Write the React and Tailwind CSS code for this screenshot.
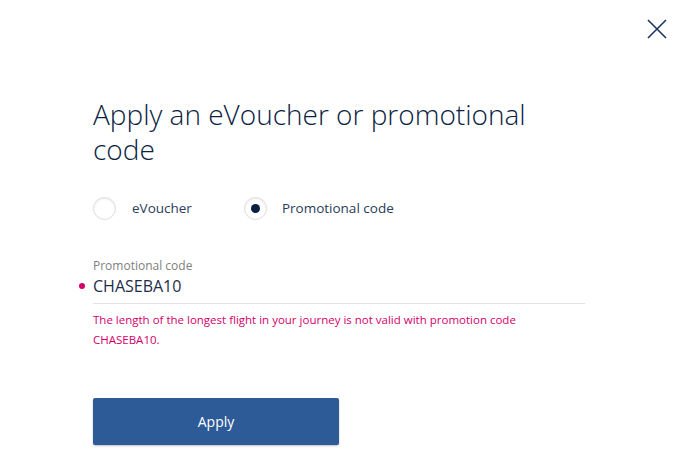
import { useState } from "react";

export default function App() {
  const [type, setType] = useState("promo");
  const [code, setCode] = useState("CHASEBA10");

  return (
    <div className="relative w-[691px] h-[462px] bg-white overflow-hidden font-['Open_Sans',sans-serif] text-[#0f2a4a]">
      <button className="absolute top-[19px] right-[24px] w-[20px] h-[20px]" aria-label="Close">
        <svg viewBox="0 0 20 20" className="w-full h-full" fill="none" stroke="#1c355e" strokeWidth="1.6">
          <path d="M1 1 L19 19 M19 1 L1 19" />
        </svg>
      </button>

      <div className="pl-[93px] pt-[97px] w-[585px]">
        <h1 className="text-[28px] leading-[35px] font-light text-[#0b2343]">
          Apply an eVoucher or promotional code
        </h1>

        <div className="flex items-center mt-[30px] text-[13.5px] text-[#2a3c5a]">
          <label className="flex items-center gap-[16px] cursor-pointer" onClick={() => setType("evoucher")}>
            <span className="w-[23px] h-[23px] rounded-full border border-[#dcdcdc] shadow-[inset_0_1px_2px_rgba(0,0,0,0.08)] flex items-center justify-center">
              {type === "evoucher" && <span className="w-[9px] h-[9px] rounded-full bg-[#0b1f45]" />}
            </span>
            eVoucher
          </label>
          <label className="flex items-center gap-[15px] ml-[52px] cursor-pointer" onClick={() => setType("promo")}>
            <span className="w-[23px] h-[23px] rounded-full border border-[#dcdcdc] shadow-[inset_0_1px_2px_rgba(0,0,0,0.08)] flex items-center justify-center">
              {type === "promo" && <span className="w-[9px] h-[9px] rounded-full bg-[#0b1f45]" />}
            </span>
            Promotional code
          </label>
        </div>

        <div className="mt-[38px]">
          <div className="text-[12px] leading-[16px] text-[#808080]">Promotional code</div>
          <div className="relative border-b border-[#e3e3e3] pb-[5px]">
            <span className="absolute left-[-14px] top-[9px] w-[6px] h-[6px] rounded-full bg-[#d4006a]" />
            <input
              value={code}
              onChange={(e) => setCode(e.target.value)}
              className="w-full outline-none text-[16px] leading-[24px] text-[#1c2d4a] bg-transparent"
            />
          </div>
          <p className="mt-[6px] text-[11.5px] leading-[20px] text-[#d4006a] w-[470px]">
            The length of the longest flight in your journey is not valid with promotion code CHASEBA10.
          </p>
        </div>

        <button className="mt-[48px] w-[246px] h-[47px] rounded-[2px] bg-[#2d5b98] text-white text-[14px] font-medium shadow-[0_1px_2px_rgba(0,0,0,0.25)]">
          Apply
        </button>
      </div>
    </div>
  );
}
